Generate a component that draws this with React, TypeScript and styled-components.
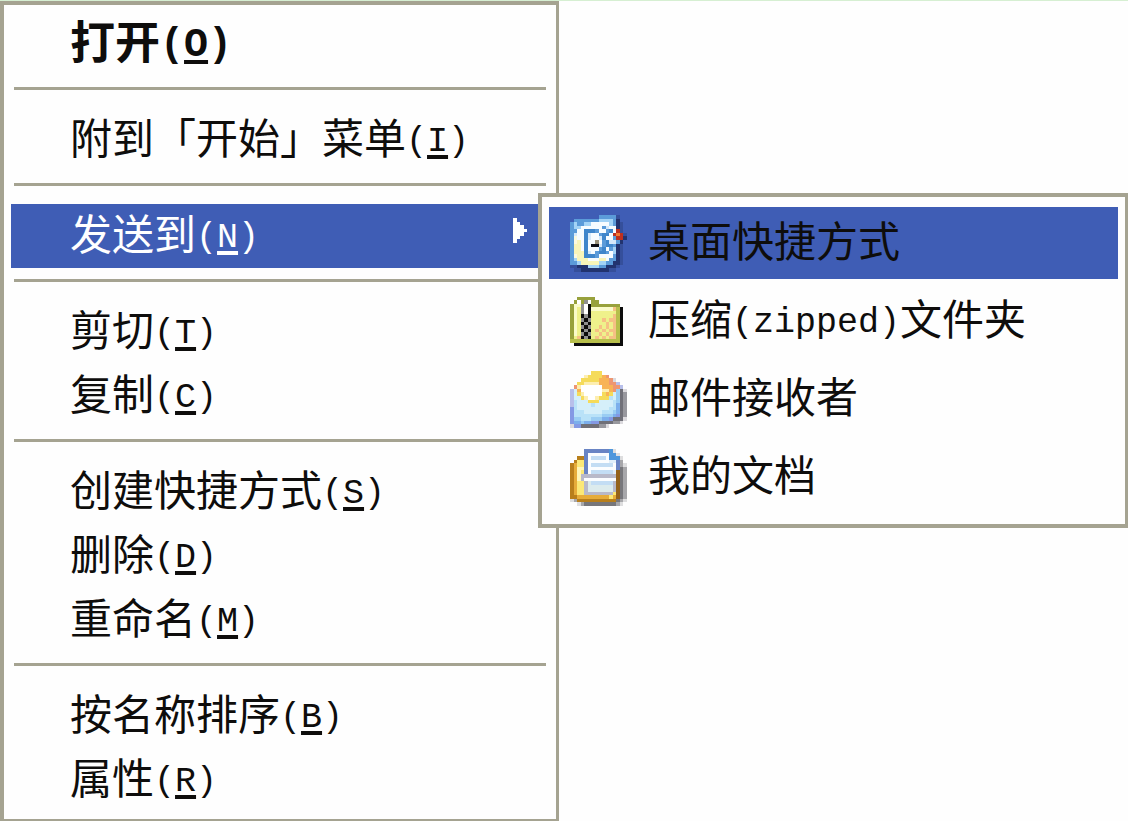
import React from "react";
import styled, { createGlobalStyle } from "styled-components";

const LINE = "#a5a391";
const BLUE = "#3f5db5";
const INK = "#0e0d0c";

const GlobalStyle = createGlobalStyle`
  * { box-sizing: border-box; }
  body {
    margin: 0;
    background: #fefefe;
    color: ${INK};
    font-family: "Noto Sans CJK SC", sans-serif;
  }
`;

const Desktop = styled.main`
  display: grid;
  grid-template-columns: 559fr 569fr;
  align-items: start;
  border-top: 1px solid #d6efd2;
  overflow: hidden;
`;

const Menu = styled.div`
  padding: 7px;
  background: #fefefe;
  border: 4px solid ${LINE};
  border-right-width: 3px;
  border-bottom-width: 2px;
`;

const SubMenu = styled.div`
  display: grid;
  gap: 6px;
  z-index: 1;
  margin: 192px 0 0 -21px;
  padding: 10px 7px 11px;
  background: #fefefe;
  border: 4px solid ${LINE};
  border-right-width: 3px;
`;

const Item = styled.button<{ $active?: boolean; $bold?: boolean }>`
  display: flex;
  align-items: center;
  width: 100%;
  height: 64px;
  padding: 0 22px 0 59px;
  border: 0;
  background: ${(p) => (p.$active ? BLUE : "transparent")};
  color: ${(p) => (p.$active ? "#ffffff" : INK)};
  font-family: inherit;
  font-size: ${(p) => (p.$bold ? 45 : 42)}px;
  font-weight: ${(p) => (p.$bold ? 700 : 400)};
  line-height: 64px;
  text-align: left;
  white-space: nowrap;
`;

const SubItem = styled(Item)`
  gap: 21px;
  height: 72px;
  padding: 0 21px;
  color: ${INK};
`;

const Label = styled.span`
  flex: 1;
  padding-bottom: 8px;
`;

const Latin = styled.span<{ $bold?: boolean }>`
  font-family: "Liberation Mono", monospace;
  font-size: ${(p) => (p.$bold ? 40 : 35)}px;
  line-height: 1;
  vertical-align: 3px;
`;

const Key = styled.u`
  text-decoration-thickness: 4px;
  text-underline-offset: 4px;
  text-decoration-skip-ink: none;
`;

const Separator = styled.hr`
  height: 3px;
  margin: 11px 3px 18px;
  border: 0;
  background: ${LINE};
`;

const Icon = styled.svg`
  display: block;
  flex: none;
  width: 57px;
  height: 57px;
`;

const ArrowIcon = styled.svg`
  display: block;
  flex: none;
  width: 14px;
  height: 25px;
  margin-bottom: 11px;
`;

type Palette = Record<string, string>;

function PixelIcon({ rows, palette }: { rows: string[]; palette: Palette }) {
  return (
    <Icon viewBox="0 0 16 16" shapeRendering="crispEdges" aria-hidden="true">
      {rows.flatMap((row, y) =>
        [...row].map((c, x) =>
          palette[c] ? <rect key={`${x}-${y}`} x={x} y={y} width="1" height="1" fill={palette[c]} /> : null
        )
      )}
    </Icon>
  );
}

const desktop = {
  palette: {
    b: "#5b9bd9", c: "#3f86cb", l: "#a3d3f6", w: "#f7fcff", p: "#d5e9fa",
    y: "#f8f5b9", z: "#fbfae0", k: "#0d0f16", t: "#9a927c",
    d: "#354f9b", n: "#22336f", r: "#bd3020", o: "#f47a35",
  },
  rows: [
    "........bbbbbd..",
    ".bbbbbbbllllbn..",
    "blbbllwwwwwlbnd.",
    "bllwwwwwwbpwwnd.",
    "bbwwcccbwwbcwrd.",
    "bpwwcpwwbccwrord",
    "bzwwcpwwpcwwbrrn",
    "bzywcwwtwbcppbn.",
    "byywcwkkpbccbnd.",
    "byywcwwwbcwblnd.",
    "byyycpwbccbwlnd.",
    "bzyycccbwwwwbnd.",
    "blyyywwwyywbbnd.",
    "bblyyyyyllbbnnd.",
    "ddnnnlllbbnnnd..",
    ".ddnnnnnnnndd...",
  ],
};

const zipped = {
  palette: {
    g: "#98a13c", h: "#b7bf4b", y: "#eff18b", p: "#fafbc9", w: "#ffffff",
    s: "#8f8f8f", k: "#0c0c0c", o: "#f6c184",
  },
  rows: [
    "................",
    "..ggggg.........",
    ".gwgswgg........",
    "gppswkgggggggg..",
    "gpyswkppppppohk.",
    "gpyswkyyyyyyyhk.",
    "gpykskyyyyyyohk.",
    "gpysksyyyoyoohk.",
    "gpykskyyyyoyohk.",
    "gpysksyyoyoyohk.",
    "gpykskyoyoyoohk.",
    "gpysksyyoyoyohk.",
    "gyokskyoyoyoohk.",
    "hhhhhhhhhhhhhhk.",
    ".kkkkkkkkkkkkkk.",
    "................",
  ],
};

const mail = {
  palette: {
    g: "#dcdade", s: "#98989e", d: "#707078", y: "#f5db5a", o: "#f8b356",
    q: "#ee9672", w: "#ffffff", c: "#fdeeb0", v: "#b8bfea", u: "#8499e4",
    a: "#d5effa", b: "#b9e2f8", l: "#9acdf3", m: "#7cafec",
  },
  rows: [
    "......yyy.......",
    "....cyyyyoq.....",
    "...yyyyyoooqg...",
    "..yyccccoooqqv..",
    ".qcwwwwwwoooqqv.",
    "vaowwwwwwccoqldg",
    "vaycwwwwwyoyalds",
    "vaaycwwcyyybalds",
    "vbaaayyyaaaablds",
    "vbaaaabaaaaabmds",
    "ubaaaaaaaaabbmds",
    "ubbbaaaaabbblmds",
    "ubbbbbbbblllmuds",
    "ullbbblllmmudddg",
    "ummlmmuuddddssg.",
    "guudddddssg.....",
  ],
};

const documents = {
  palette: {
    b: "#6984c4", w: "#fbfdff", l: "#c3ddf4", p: "#e1effa", c: "#4f97dc",
    k: "#b87f1c", m: "#93611a", o: "#e6ac3a", y: "#fbe877", z: "#fff6b8",
    a: "#dcebed", v: "#b8b9c9", s: "#77777b", d: "#a7a7aa", g: "#dededf",
  },
  rows: [
    "....bbbbbbbcg...",
    "....bwwwwwwccg..",
    "..kkbwllllwcccg.",
    ".kyybwwwwwwppbd.",
    "koyybwllllllwbdg",
    "kozzbwwwwwwwwbsd",
    "kozybwllllllpmsd",
    "kozvvvvvvvvvvmsd",
    "kozvwwwwwwwwwmsd",
    "koyyvallllllvmsd",
    "koyyvaaaaaaavmsd",
    "koyyvaaaaaaavmsd",
    "koyyvvvvvvvvymsd",
    "kkoooooooooyomsd",
    "gdkkkkkkkkkkksdg",
    "..gdsssssssssdg.",
  ],
};

type Entry = { text: string; letter: string; bold?: boolean; active?: boolean };

const groups: Entry[][] = [
  [{ text: "打开", letter: "O", bold: true }],
  [{ text: "附到「开始」菜单", letter: "I" }],
  [{ text: "发送到", letter: "N", active: true }],
  [
    { text: "剪切", letter: "T" },
    { text: "复制", letter: "C" },
  ],
  [
    { text: "创建快捷方式", letter: "S" },
    { text: "删除", letter: "D" },
    { text: "重命名", letter: "M" },
  ],
  [
    { text: "按名称排序", letter: "B" },
    { text: "属性", letter: "R" },
  ],
];

const targets = [
  { icon: desktop, label: "桌面快捷方式" },
  { icon: zipped, label: <>压缩<Latin>(zipped)</Latin>文件夹</> },
  { icon: mail, label: "邮件接收者" },
  { icon: documents, label: "我的文档" },
];

export default function App() {
  return (
    <>
      <GlobalStyle />
      <Desktop>
        <Menu role="menu">
          {groups.map((group, i) => (
            <React.Fragment key={i}>
              {i > 0 && <Separator />}
              {group.map((entry) => (
                <Item
                  key={entry.letter}
                  type="button"
                  role="menuitem"
                  aria-haspopup={entry.active ? "menu" : undefined}
                  $active={entry.active}
                  $bold={entry.bold}
                >
                  <Label>
                    {entry.text}
                    <Latin $bold={entry.bold}>
                      (<Key>{entry.letter}</Key>)
                    </Latin>
                  </Label>
                  {entry.active && (
                    <ArrowIcon
                      viewBox="0 0 4 7"
                      preserveAspectRatio="none"
                      shapeRendering="crispEdges"
                      aria-hidden="true"
                    >
                      <path fill="#fff" d="M0 0h1v1h1v1h1v1h1v1H3v1H2v1H1v1H0z" />
                    </ArrowIcon>
                  )}
                </Item>
              ))}
            </React.Fragment>
          ))}
        </Menu>
        <SubMenu role="menu">
          {targets.map((target, i) => (
            <SubItem key={i} type="button" role="menuitem" $active={i === 0}>
              <PixelIcon {...target.icon} />
              <Label>{target.label}</Label>
            </SubItem>
          ))}
        </SubMenu>
      </Desktop>
    </>
  );
}
